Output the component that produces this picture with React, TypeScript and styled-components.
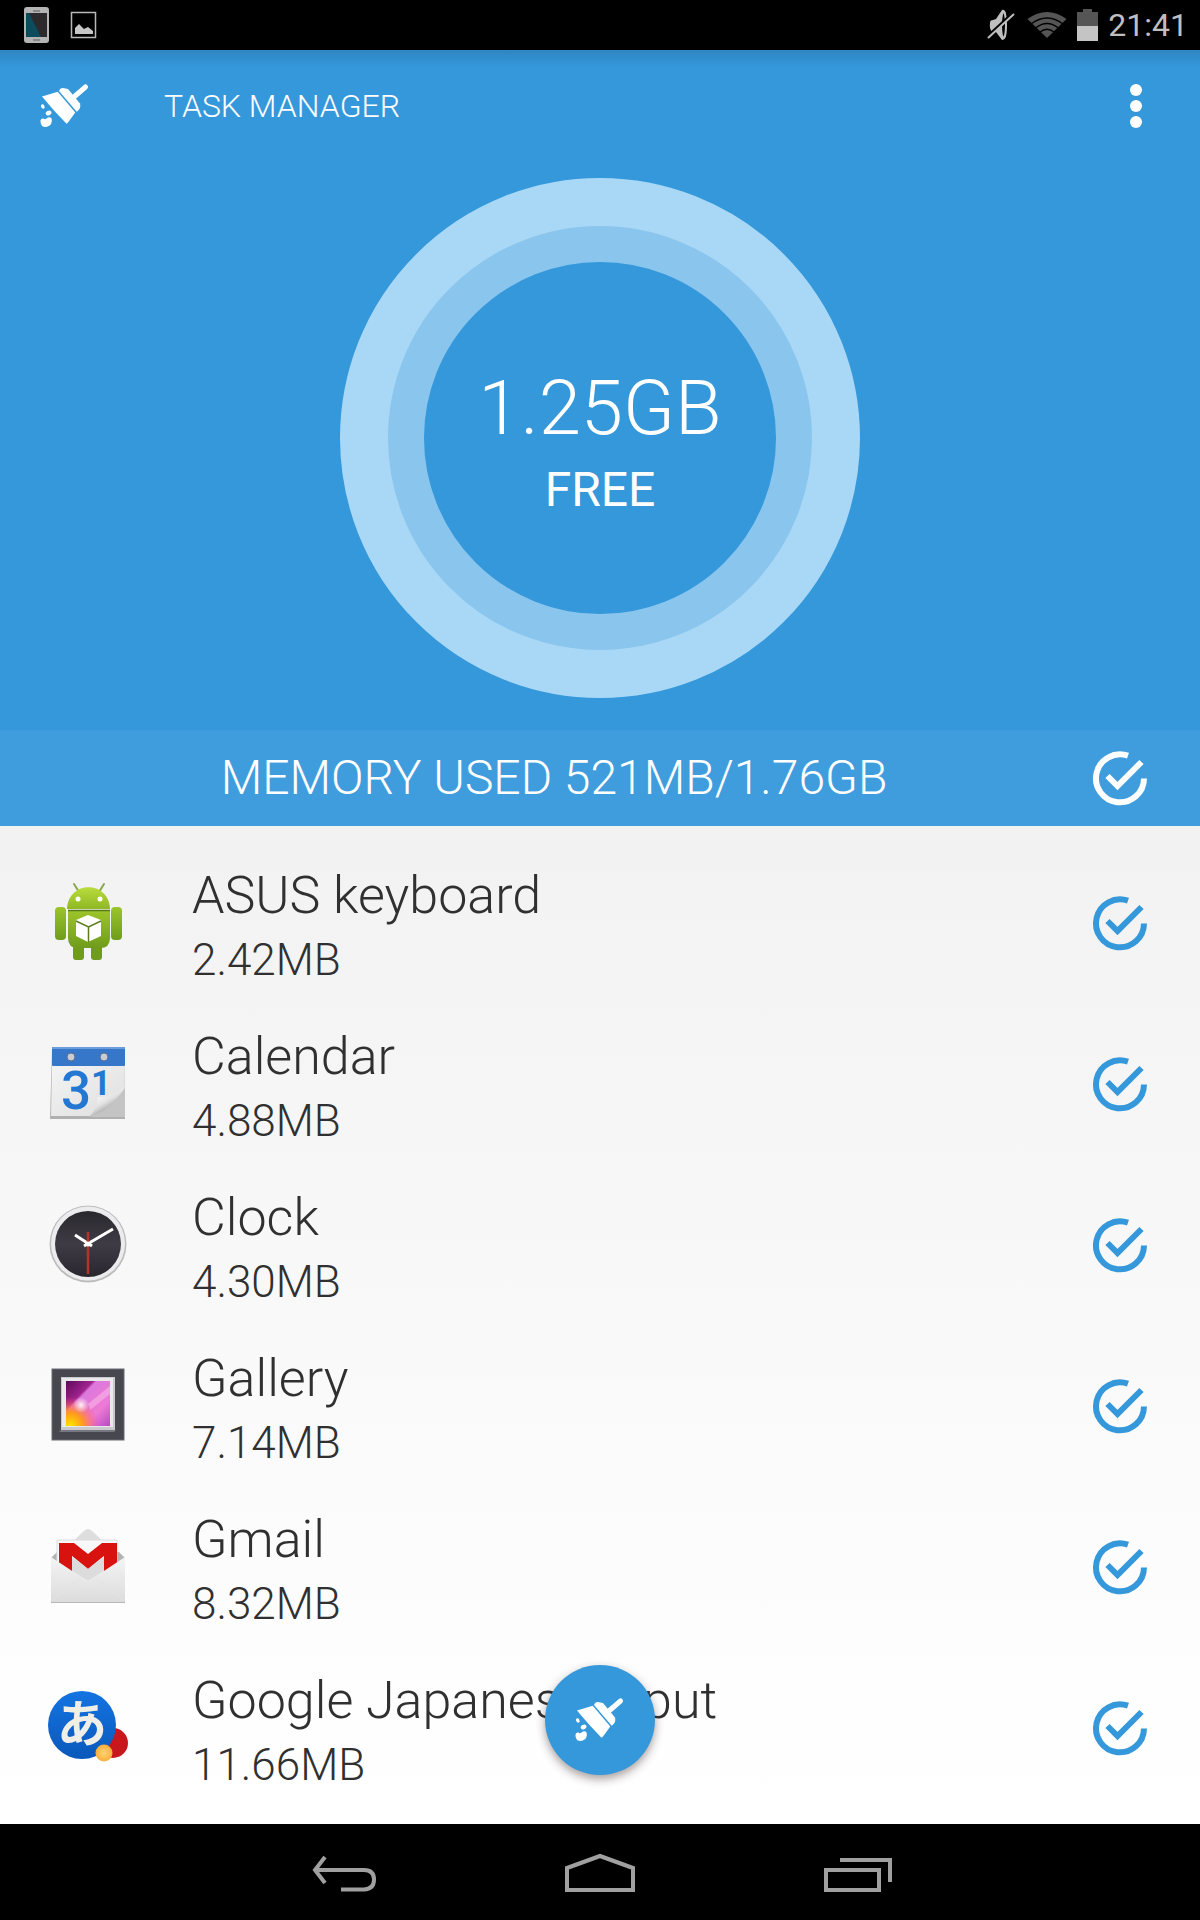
import React from "react";
import styled, { createGlobalStyle } from "styled-components";

const Global = createGlobalStyle`
  * { box-sizing: border-box; }
  body { margin: 0; background: #000; font-family: Roboto, "Noto Sans", sans-serif; font-weight: 300; }
  h1, h2, p, ul { margin: 0; padding: 0; font-weight: inherit; }
  svg { display: block; flex: none; overflow: visible; }
`;

const Screen = styled.div`
  min-height: 100vh;
  display: flex;
  flex-direction: column;
`;

const StatusBar = styled.div`
  height: 50px;
  padding: 0 12px 0 24px;
  display: flex;
  align-items: center;
  justify-content: space-between;
  background: #000;
  color: #bfbfbf;
`;

const StatusGroup = styled.div<{ $gap: number }>`
  display: flex;
  align-items: center;
  gap: ${(p) => p.$gap}px;
`;

const Time = styled.time`
  font-size: 32px;
  line-height: 40px;
  font-weight: 400;
`;

const Hero = styled.header`
  background: linear-gradient(#2f86c2, #3498db 18px);
  color: #fff;
`;

const AppBar = styled.div`
  height: 112px;
  padding: 0 40px;
  display: flex;
  align-items: center;
`;

const AppTitle = styled.h1`
  flex: 1;
  padding-left: 74px;
  font-size: 32px;
  line-height: 40px;
`;

const IconButton = styled.button`
  display: flex;
  align-items: center;
  justify-content: center;
  width: 48px;
  height: 56px;
  padding: 0;
  border: 0;
  background: none;
  color: inherit;
`;

const GaugeArea = styled.div`
  display: flex;
  justify-content: center;
  padding: 16px 0 32px;
`;

const Gauge = styled.div`
  width: 520px;
  height: 520px;
  border: 48px solid #a9d8f6;
  border-radius: 50%;
  background: #a9d8f6;
`;

const GaugeInner = styled.div`
  width: 100%;
  height: 100%;
  padding: 12px 0 0;
  border: 36px solid #8ac5ed;
  border-radius: 50%;
  background: #3498db;
  display: flex;
  flex-direction: column;
  align-items: center;
  justify-content: center;
`;

const FreeAmount = styled.p`
  font-size: 76px;
  line-height: 92px;
`;

const FreeLabel = styled.p`
  font-size: 48px;
  line-height: 72px;
  font-weight: 400;
`;

const MemoryBar = styled.div`
  height: 96px;
  padding: 0 52px;
  display: flex;
  align-items: center;
  gap: 36px;
  background: #3f9ddd;
`;

const MemoryText = styled.h2`
  flex: 1;
  text-align: center;
  font-size: 48px;
  line-height: 60px;
`;

const Main = styled.main`
  flex: 1;
  position: relative;
  padding: 16px 0;
  background: linear-gradient(#f2f2f2, #fdfdfd 80%, #fff);
  color: #303030;
`;

const TaskList = styled.ul`
  list-style: none;
`;

const TaskRow = styled.li`
  height: 161px;
  padding: 0 52px 0 48px;
  display: flex;
  align-items: center;
`;

const TaskText = styled.div`
  flex: 1;
  padding: 10px 0 0 64px;
`;

const TaskName = styled.p`
  font-size: 52px;
  line-height: 64px;
`;

const TaskSize = styled.p`
  font-size: 44px;
  line-height: 64px;
`;

const CheckLabel = styled.label<{ $color: string }>`
  position: relative;
  display: block;
  width: 56px;
  height: 56px;
  color: ${(p) => p.$color};
  input {
    position: absolute;
    inset: 0;
    width: 100%;
    height: 100%;
    margin: 0;
    opacity: 0;
  }
`;

const CleanButton = styled.button`
  position: absolute;
  left: 50%;
  bottom: 49px;
  transform: translateX(-50%);
  width: 110px;
  height: 110px;
  padding: 0;
  border: 0;
  border-radius: 50%;
  display: flex;
  align-items: center;
  justify-content: center;
  background: #3498db;
  color: #fff;
  box-shadow: 0 4px 10px rgba(60, 40, 40, 0.45);
`;

const NavBar = styled.nav`
  height: 96px;
  display: flex;
  align-items: center;
  justify-content: center;
  gap: 184px;
  background: #000;
  color: #a0a0a0;
`;

const NavButton = styled(IconButton)`
  width: 72px;
  height: 72px;
`;

const Brush = () => (
  <svg width="50" height="44" viewBox="0 0 50 44" fill="currentColor" aria-hidden="true">
    <path d="M2 12.500Q9 10.500 17.700 7.800L35.300 28.500L28 38.500L26.500 39.800Q13 26 2 12.500Z" />
    <path d="M19 7Q20 3.800 23 3.900L28 5L40 19.500Q41.500 24.500 36.700 27.700Z" />
    <path d="M31 15.500L45.500 3" stroke="currentColor" strokeWidth="5" strokeLinecap="round" />
    <ellipse cx="2.800" cy="22.500" rx="1.700" ry="2.300" transform="rotate(-30 2.800 22.500)" />
    <ellipse cx="8.600" cy="29" rx="3" ry="2.200" transform="rotate(-30 8.600 29)" />
    <path d="M0.500 36.500Q1 34.300 3.300 34.600Q5 36 6.500 34.500Q9 32.500 11.300 34Q12.800 37.500 10.300 41Q6 44.500 2 42Q0 39.500 0.500 36.500Z" />
  </svg>
);

const CheckIcon = () => (
  <svg width="56" height="56" viewBox="0 0 56 56" fill="none" stroke="currentColor" aria-hidden="true">
    <path d="M36 5.700A24 24 0 1 0 52 28.500" strokeWidth="6" />
    <path d="M15.500 26L25.500 36L49.500 12" strokeWidth="6" />
  </svg>
);

const Check = ({ label, color }: { label: string; color: string }) => (
  <CheckLabel $color={color}>
    <input type="checkbox" defaultChecked aria-label={label} />
    <CheckIcon />
  </CheckLabel>
);

const AndroidIcon = () => (
  <svg width="80" height="80" viewBox="0 1 80 80" aria-hidden="true">
    <defs>
      <linearGradient id="droid" x1="0" y1="0" x2="0" y2="1">
        <stop offset="0" stopColor="#9cc42a" />
        <stop offset="1" stopColor="#6f9c1c" />
      </linearGradient>
      <linearGradient id="head" x1="0" y1="0" x2="0" y2="1">
        <stop offset="0" stopColor="#b9dc3c" />
        <stop offset="1" stopColor="#8fb824" />
      </linearGradient>
    </defs>
    <path d="M26 2l5 8M56 2l-5 8" stroke="#8aa84a" strokeWidth="2" strokeLinecap="round" />
    <path d="M19 27C20 -2 61 -2 62 27Z" fill="url(#head)" />
    <path d="M20 29h42v27q0 10-10 10H30q-10 0-10-10Z" fill="url(#droid)" />
    <path d="M20 28.500h42" stroke="#567a17" strokeWidth="1.500" />
    <rect x="7" y="25" width="11" height="33" rx="4" fill="url(#droid)" />
    <rect x="63" y="25" width="11" height="33" rx="4" fill="url(#droid)" />
    <path d="M25 65h11v10q0 3-3 3h-5q-3 0-3-3ZM43 65h11v10q0 3-3 3h-5q-3 0-3-3Z" fill="#6f9c1c" />
    <circle cx="30" cy="17" r="2.500" fill="#fff" />
    <circle cx="52" cy="17" r="2.500" fill="#fff" />
    <path d="M28 38l12-5l13 5v16l-13 6l-12-6Z" fill="#fff" />
    <path d="M28 39l12.500 6L53 39M40.500 45v15" stroke="#5b7d1b" strokeWidth="1.500" fill="none" />
  </svg>
);

const CalendarIcon = () => (
  <svg width="80" height="80" viewBox="0 1 80 80" aria-hidden="true">
    <defs>
      <linearGradient id="page" x1="0" y1="0" x2="1" y2="1">
        <stop offset="0" stopColor="#f4f4f4" />
        <stop offset="1" stopColor="#dedede" />
      </linearGradient>
      <linearGradient id="curl" x1="0.300" y1="0.200" x2="0.700" y2="0.800">
        <stop offset="0" stopColor="#fff" />
        <stop offset="0.500" stopColor="#e2e2e2" />
        <stop offset="1" stopColor="#8f8f8f" />
      </linearGradient>
    </defs>
    <path d="M2 76L4 5h72l1 71Z" fill="#b0b0b0" />
    <path d="M4 22h72l1 51H3Z" fill="url(#page)" />
    <rect x="4" y="4" width="73" height="19" rx="1" fill="#3777c9" />
    <path d="M4 5h73" stroke="#6b9ddd" strokeWidth="2" />
    <circle cx="23" cy="14" r="4" fill="#c7ccd5" stroke="#5c6d8c" />
    <circle cx="56" cy="14" r="4" fill="#c7ccd5" stroke="#5c6d8c" />
    <text x="13" y="66" fill="#2478d4" fontFamily="Roboto, sans-serif" fontWeight="500" fontSize="53">3</text>
    <text x="43" y="52" fill="#2478d4" fontFamily="Roboto, sans-serif" fontWeight="700" fontSize="35">1</text>
    <path d="M42 74Q60 68 77 45V74Z" fill="#c4c4c4" />
    <path d="M41 74Q49 66 50 54Q64 56 77 42Q64 68 41 74Z" fill="url(#curl)" />
  </svg>
);

const ClockIcon = () => (
  <svg width="80" height="80" viewBox="0 2 80 80" aria-hidden="true">
    <defs>
      <linearGradient id="face" x1="0" y1="0" x2="0" y2="1">
        <stop offset="0" stopColor="#29282e" />
        <stop offset="0.500" stopColor="#3f3b45" />
        <stop offset="1" stopColor="#29262e" />
      </linearGradient>
    </defs>
    <circle cx="40" cy="41" r="38.500" fill="#bdbdbd" />
    <circle cx="40" cy="40.500" r="37" fill="#ececee" />
    <circle cx="40" cy="41" r="33" fill="url(#face)" />
    <path d="M27 32L44 43M36 43L65 26" stroke="#fff" strokeWidth="3" />
    <path d="M40 29V71" stroke="#b5342a" strokeWidth="2.500" />
    <circle cx="40" cy="41" r="2.500" fill="#fff" />
  </svg>
);

const GalleryIcon = () => (
  <svg width="80" height="80" viewBox="0 2 80 80" aria-hidden="true">
    <defs>
      <linearGradient id="sky" x1="0" y1="0" x2="1" y2="1">
        <stop offset="0" stopColor="#5a0b5c" />
        <stop offset="0.310" stopColor="#a2238f" />
        <stop offset="0.350" stopColor="#dc78dc" />
        <stop offset="0.700" stopColor="#ee7ad4" />
        <stop offset="1" stopColor="#b84ac6" />
      </linearGradient>
      <radialGradient id="sun" cx="0.100" cy="1" r="0.650">
        <stop offset="0" stopColor="#ffe600" />
        <stop offset="0.450" stopColor="#ff9a1e" />
        <stop offset="1" stopColor="#ff4f90" stopOpacity="0" />
      </radialGradient>
      <radialGradient id="glow">
        <stop offset="0" stopColor="#fff" stopOpacity="0.900" />
        <stop offset="1" stopColor="#fff" stopOpacity="0" />
      </radialGradient>
    </defs>
    <rect x="4" y="5" width="72" height="71" fill="#47474f" stroke="#6a6a72" />
    <path d="M13 66h55l-2 2H11Z" fill="#77777f" />
    <rect x="13" y="13" width="54" height="53" fill="#c9c9cd" />
    <rect x="14" y="14" width="51" height="49" fill="#e9e9ec" />
    <rect x="18" y="17" width="44" height="45" fill="url(#sky)" />
    <path d="M40 40L62 22V30L42 46Z" fill="#ffc0ea" opacity="0.500" />
    <rect x="18" y="17" width="44" height="45" fill="url(#sun)" />
    <circle cx="33" cy="41" r="8" fill="url(#glow)" />
  </svg>
);

const GmailIcon = () => (
  <svg width="80" height="80" viewBox="0 0 80 80" aria-hidden="true">
    <defs>
      <linearGradient id="env" x1="0" y1="0" x2="0" y2="1">
        <stop offset="0" stopColor="#f4f4f4" />
        <stop offset="1" stopColor="#dcdcdc" />
      </linearGradient>
    </defs>
    <path d="M22 17L36 4Q40 0 44 4L58 17Z" fill="#dedede" />
    <path d="M3 31L9 25H71L77 31V76H3Z" fill="#b3b3b3" />
    <path d="M9 13h60v42H9Z" fill="#f8f8f8" stroke="#dcdcdc" />
    <path d="M11 16H26L40 27L54 16H69V45H56V29L40 42L24 29V45H11Z" fill="#d8130f" />
    <path d="M24 29L40 42L56 29V44L40 54L24 44Z" fill="#dcdcdc" />
    <path d="M3 30L40 54.500L77 30V74Q77 75 76 75H4Q3 75 3 74Z" fill="url(#env)" />
    <path d="M4 74L32 51M76 74L48 51" stroke="#e4e4e4" />
    <path d="M3 75.500H77" stroke="#b8b8b8" />
  </svg>
);

const JapaneseInputIcon = () => (
  <svg width="80" height="80" viewBox="0 1 80 80" aria-hidden="true">
    <defs>
      <linearGradient id="ball" x1="0" y1="0" x2="0" y2="1">
        <stop offset="0" stopColor="#1474e2" />
        <stop offset="1" stopColor="#0a58ba" />
      </linearGradient>
      <radialGradient id="gold">
        <stop offset="0" stopColor="#ffd475" />
        <stop offset="1" stopColor="#f7ae3c" />
      </radialGradient>
    </defs>
    <circle cx="65" cy="56" r="15" fill="#c8171d" />
    <circle cx="34" cy="38" r="34" fill="url(#ball)" />
    <text x="9" y="55" fill="#efefe8" fontFamily='"Noto Sans CJK JP", sans-serif' fontWeight="700" fontSize="50">あ</text>
    <circle cx="56" cy="66" r="8.500" fill="url(#gold)" />
  </svg>
);

const tasks = [
  { name: "ASUS keyboard", size: "2.42MB", Icon: AndroidIcon },
  { name: "Calendar", size: "4.88MB", Icon: CalendarIcon },
  { name: "Clock", size: "4.30MB", Icon: ClockIcon },
  { name: "Gallery", size: "7.14MB", Icon: GalleryIcon },
  { name: "Gmail", size: "8.32MB", Icon: GmailIcon },
  { name: "Google Japanese Input", size: "11.66MB", Icon: JapaneseInputIcon },
];

export default function App() {
  return (
    <Screen>
      <Global />
      <StatusBar>
        <StatusGroup $gap={22}>
          <svg width="25" height="36" viewBox="0 0 25 36" aria-hidden="true">
            <rect width="25" height="36" rx="3" fill="#b4b4b4" />
            <rect x="2" y="6" width="21" height="24" fill="#2b292c" />
            <path d="M2 6h3l12 24H2Z" fill="#0c4c5c" />
            <path d="M9 4h7M9 33h7" stroke="#888" strokeWidth="2" />
          </svg>
          <svg width="25" height="26" viewBox="0 0 25 26" aria-hidden="true">
            <rect x="0.500" y="0.500" width="24" height="25" fill="none" stroke="#b8b8b8" strokeWidth="1.500" />
            <path d="M4 22V16L8 12L13 17L17 15L22 19V22Z" fill="#c6c6c6" />
          </svg>
        </StatusGroup>
        <StatusGroup $gap={10}>
          <svg width="30" height="32" viewBox="0 0 30 32" aria-hidden="true">
            <path d="M3 14Q3 11 6 11L9 10L15 1Q18 0 19 5Q16 16 19 26Q18 31 15 31L9 23H5Q2 19 3 14Z" fill="#bfbfbf" />
            <ellipse cx="16.500" cy="16" rx="2.500" ry="13" fill="#000" stroke="#bfbfbf" strokeWidth="2" />
            <path d="M1 27L27 3" stroke="#000" strokeWidth="3" />
            <path d="M1 29L27 5" stroke="#bfbfbf" strokeWidth="2" />
          </svg>
          <svg width="40" height="26" viewBox="0 0 40 26" aria-hidden="true">
            <path d="M0.500 7Q20-7 39.500 7L20 26Z" fill="#555" />
            <path d="M4 12Q20 0 36 12M8.500 16Q20 7 31.500 16M13 20Q20 14.500 27 20" fill="none" stroke="#000" strokeWidth="1.500" />
          </svg>
          <svg width="21" height="32" viewBox="0 0 21 32" aria-hidden="true">
            <path d="M6 0h9v3h6v14H0V3h6Z" fill="#555" />
            <path d="M0 17h21v15H0Z" fill="#c4c4c4" />
          </svg>
          <Time>21:41</Time>
        </StatusGroup>
      </StatusBar>

      <Hero>
        <AppBar>
          <Brush />
          <AppTitle>TASK MANAGER</AppTitle>
          <IconButton type="button" aria-label="More options">
            <svg width="12" height="44" viewBox="0 0 12 44" fill="currentColor" aria-hidden="true">
              <circle cx="6" cy="6" r="6" />
              <circle cx="6" cy="22" r="6" />
              <circle cx="6" cy="38" r="6" />
            </svg>
          </IconButton>
        </AppBar>
        <GaugeArea>
          <Gauge>
            <GaugeInner>
              <FreeAmount>1.25GB</FreeAmount>
              <FreeLabel>FREE</FreeLabel>
            </GaugeInner>
          </Gauge>
        </GaugeArea>
        <MemoryBar>
          <MemoryText>MEMORY USED 521MB/1.76GB</MemoryText>
          <Check label="Select all" color="#fff" />
        </MemoryBar>
      </Hero>

      <Main>
        <TaskList>
          {tasks.map(({ name, size, Icon }) => (
            <TaskRow key={name}>
              <Icon />
              <TaskText>
                <TaskName>{name}</TaskName>
                <TaskSize>{size}</TaskSize>
              </TaskText>
              <Check label={name} color="#3498db" />
            </TaskRow>
          ))}
        </TaskList>
        <CleanButton type="button" aria-label="Clean memory">
          <Brush />
        </CleanButton>
      </Main>

      <NavBar>
        <NavButton type="button" aria-label="Back">
          <svg width="66" height="44" viewBox="0 0 66 44" fill="none" stroke="currentColor" strokeWidth="4" aria-hidden="true">
            <path d="M4 20H53Q63 20 63 29.500T53 39.500H30" />
            <path d="M14 7L4 20L14 33" />
          </svg>
        </NavButton>
        <NavButton type="button" aria-label="Home">
          <svg width="72" height="44" viewBox="0 0 72 44" fill="none" stroke="currentColor" strokeWidth="4" aria-hidden="true">
            <path d="M3 18L36 6L69 18V40H3Z" />
          </svg>
        </NavButton>
        <NavButton type="button" aria-label="Recent apps">
          <svg width="68" height="44" viewBox="0 0 68 44" fill="none" stroke="currentColor" strokeWidth="4" aria-hidden="true">
            <path d="M4 20H57V40H4ZM18 10H68V32" />
          </svg>
        </NavButton>
      </NavBar>
    </Screen>
  );
}
